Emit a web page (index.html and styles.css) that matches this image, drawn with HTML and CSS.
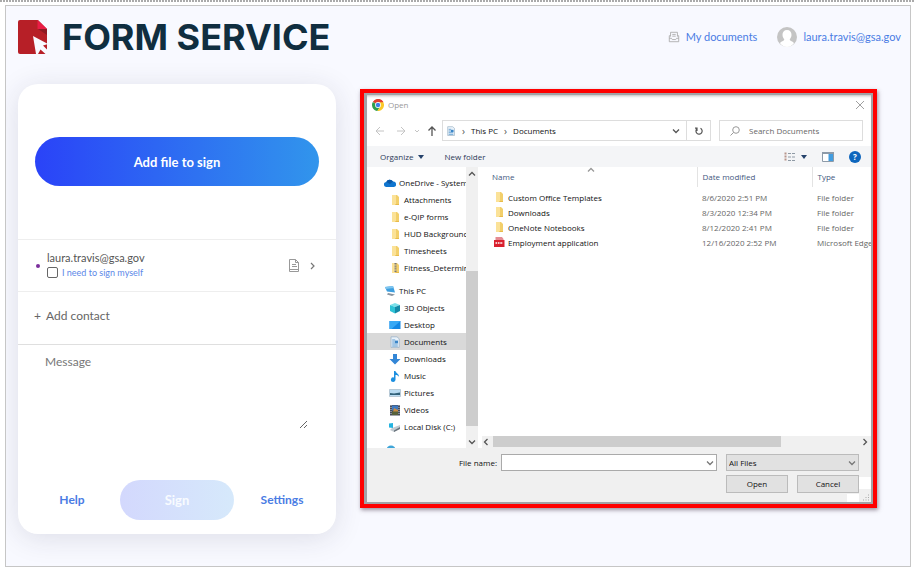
FILE: index.html
```html
<!DOCTYPE html>
<html lang="en">
<head>
<meta charset="utf-8">
<meta name="viewport" content="width=device-width, initial-scale=1">
<title>Form Service</title>
<link rel="stylesheet" href="styles.css">
</head>
<body>
<svg class="sprite" aria-hidden="true">
  <symbol id="folder" viewBox="0 0 12 12"><path fill="#f2cf6b" d="M3 1h5l2 2v8H3z"/><path fill="#fbe298" d="M3 1h4v9l-1 1H3z"/><path fill="#e8bb4b" d="M7 10h3v1H6z"/></symbol>
  <symbol id="doc" viewBox="0 0 12 12"><path fill="#e9f2fa" stroke="#9db3c6" stroke-width=".8" d="M2 .8h6l2.200 2v8.600H2z"/><path stroke="#5c9bd0" d="M3.200 4h3M3.200 6h5.600M3.200 8h5.600M3.200 10h5.600"/><path fill="#3a86c8" d="M6 4.600h3v2.600H6z"/></symbol>
  <symbol id="down" viewBox="0 0 8 8"><path fill="none" stroke="currentColor" stroke-width="1.300" d="M1 2.500l3 3 3-3"/></symbol>
</svg>
<div class="frame">
  <header class="top">
    <a class="brand" href="#">
      <svg class="brand-mark" viewBox="0 0 30 34" aria-hidden="true"><path fill="#b71f27" d="M0 2q0-2 2-2h18l9 9v25H2q-2 0-2-2z"/><path fill="#8f1a22" d="M20 9h9v6z"/><path fill="#e91d45" d="M19.500 0L29 9h-9.500z"/><path fill="#f8f9ff" d="M15 16l15 8-5 1.500 5 5V34h-2.500l-5-4.500L20 34h-2z"/></svg>
      <span>FORM SERVICE</span>
    </a>
    <nav class="links">
      <a href="#"><svg class="tray" viewBox="0 0 14 14" aria-hidden="true"><g fill="none" stroke="#aaa"><path d="M3 6.500V1.500h8v5M5 4h4M5 6h4"/><path d="M3 5.500H1.500v7h11v-7H11M1.500 8.500H4l1 1.500h4l1-1.500h2.500"/></g></svg>My documents</a>
      <a href="#"><svg class="avatar" viewBox="0 0 20 20" aria-hidden="true"><circle cx="10" cy="10" r="10" fill="#c4c4c4"/><path fill="#fff" d="M10 3c3 0 4.600 2 4.500 5-.1 2-1 3.500-1.800 4.400 0 1.600 3.300 1.600 4.300 3.800A10 10 0 0 1 10 20a10 10 0 0 1-7-3.800c1-2.200 4.300-2.200 4.300-3.800C6.500 11.500 5.600 10 5.500 8 5.400 5 7 3 10 3z"/></svg>laura.travis@gsa.gov</a>
    </nav>
  </header>
  <main class="content">
    <form class="card">
      <div class="upload"><button type="button" class="add-file">Add file to sign</button></div>
      <div class="contact">
        <span class="dot"></span>
        <div class="person">
          <div class="mail">laura.travis@gsa.gov</div>
          <label class="self"><input type="checkbox">I need to sign myself</label>
        </div>
        <svg class="note" viewBox="0 0 11 13" aria-hidden="true"><path fill="none" stroke="#999" d="M.5.500h6l3 3v7h-9zM6.500.5v3h3M.5 10v2.500h9V10M3 5.500h4M3 7.500h5"/></svg>
        <svg class="next" viewBox="0 0 5 8" aria-hidden="true"><path fill="none" stroke="#777" stroke-width="1.200" d="M1 1l3 3-3 3"/></svg>
      </div>
      <button type="button" class="add-contact"><span>+</span>Add contact</button>
      <textarea class="message" aria-label="Message" placeholder="Message"></textarea>
      <div class="actions"><a href="#">Help</a><button type="submit" class="sign" disabled>Sign</button><a href="#">Settings</a></div>
    </form>

    <section class="highlight"><form class="dialog">
      <div class="title">
        <svg class="i12" viewBox="0 0 12 12" aria-hidden="true"><path fill="#e2402f" d="M6 6L1 2.900A6 6 0 0 1 11.400 3.400z"/><path fill="#e2402f" d="M.9 3h10.500A6 6 0 0 0 .9 3z"/><path fill="#2f9e4c" d="M.9 2.900A6 6 0 0 0 5.400 12L8.300 7.500z"/><path fill="#fbc827" d="M6 3.300h5.300A6 6 0 0 1 5.400 12L8.300 7.500z"/><circle cx="6" cy="6" r="2.900" fill="#fff"/><circle cx="6" cy="6" r="2.200" fill="#3f7fe8"/></svg>
        <span>Open</span>
        <button type="button" class="plain" aria-label="Close"><svg class="i8" viewBox="0 0 8 8"><path stroke="#888" stroke-width=".8" d="M0 0l8 8M8 0L0 8"/></svg></button>
      </div>
      <div class="nav">
        <svg class="arrows" viewBox="0 0 60 10" aria-hidden="true"><g fill="none" stroke="#c4c4c4"><path d="M8 5H0M4 1L0 5l4 4M21 5h8M25 1l4 4-4 4M39 4l2 2 2-2"/><path stroke="#555" stroke-width="1.300" d="M56 10V1M52.500 4.500L56 1l3.500 3.500"/></g></svg>
        <div class="address">
          <svg class="i10"><use href="#doc"/></svg><i>›</i><span>This PC</span><i>›</i><span>Documents</span>
          <svg class="i8 chev"><use href="#down"/></svg>
          <button type="button" class="refresh" aria-label="Refresh"><svg class="i8" viewBox="0 0 8 8"><path fill="none" stroke="#555" stroke-width="1.200" d="M5.500 1.300A3.100 3.100 0 1 1 2 1.700M2 4V1.200H0"/></svg></button>
        </div>
        <label class="search"><svg class="i10" viewBox="0 0 10 10" aria-hidden="true"><path fill="none" stroke="#999" d="M3.500 6.500L.5 9.500"/><circle cx="6" cy="4" r="3.300" fill="none" stroke="#999"/></svg><input type="text" aria-label="Search Documents" placeholder="Search Documents"></label>
      </div>
      <div class="tools">
        <button type="button" class="plain">Organize <svg class="tri" viewBox="0 0 6 4"><path fill="#25426b" d="M0 0h6L3 4z"/></svg></button>
        <button type="button" class="plain">New folder</button>
        <div class="views">
          <button type="button" class="plain" aria-label="View"><svg class="i12" viewBox="0 0 12 10"><path fill="none" stroke="#b8968c" stroke-width="2" stroke-dasharray="2 1" d="M1.500.5v9"/><path stroke="#8f9aa5" stroke-dasharray="3 1" d="M4 1.500h8M4 5h8M4 8.500h8"/></svg><svg class="tri" viewBox="0 0 6 4"><path fill="#25426b" d="M0 0h6L3 4z"/></svg></button>
          <button type="button" class="plain" aria-label="Preview pane"><svg class="i12" viewBox="0 0 12 10"><path fill="#fff" stroke="#8d9aa8" d="M.5.5h11v9H.5z"/><path fill="#8d9aa8" d="M0 0h12v2H0z"/><path fill="#429de0" d="M6.500 2H11v7H6.500z"/></svg></button>
          <button type="button" class="help" aria-label="Help">?</button>
        </div>
      </div>
      <div class="panes">
        <div class="tree">
          <ul>
            <li><svg class="i12" viewBox="0 0 12 12"><path fill="#0f75cf" d="M2.500 10A2.500 2.500 0 0 1 2.300 5 3.800 3.800 0 0 1 9 4.600 2.700 2.700 0 0 1 9.800 10z"/><path fill="#0a58a8" d="M2.300 5A3.800 3.800 0 0 1 9 4.600L6 7z"/></svg>OneDrive - System</li>
            <li class="sub"><svg class="i12"><use href="#folder"/></svg>Attachments</li>
            <li class="sub"><svg class="i12"><use href="#folder"/></svg>e-QIP forms</li>
            <li class="sub"><svg class="i12"><use href="#folder"/></svg>HUD Background</li>
            <li class="sub"><svg class="i12"><use href="#folder"/></svg>Timesheets</li>
            <li class="sub"><svg class="i12" viewBox="0 0 12 12"><use href="#folder"/><path stroke="#777" stroke-width="2" stroke-dasharray="1 .6" d="M6.500 1v9"/></svg>Fitness_Determination</li>
            <li class="root"><svg class="i12" viewBox="0 0 12 12"><path fill="#3d9fe0" d="M1 2l8-1 2 6.500-8-1z"/><path fill="#7fc6ef" d="M1 2l8-1 .6 2L1.800 4z"/><path fill="#8894a0" d="M4 8l7 1.500L8 11 3 9.500z"/></svg>This PC</li>
            <li class="sub"><svg class="i12" viewBox="0 0 12 12"><path fill="#7be0ea" d="M1 3l5-2 5 2-5 2z"/><path fill="#2ec3d6" d="M1 3l5 2v6.500L1 9z"/><path fill="#1389a8" d="M11 3L6 5v6.500L11 9z"/></svg>3D Objects</li>
            <li class="sub"><svg class="i12" viewBox="0 0 12 12"><path fill="#1187e4" d="M.5 2h11v8H.5z"/><path fill="#35a8f5" d="M.5 2h11l-9 8h-2z"/></svg>Desktop</li>
            <li class="sub on"><svg class="i12"><use href="#doc"/></svg>Documents</li>
            <li class="sub"><svg class="i12" viewBox="0 0 12 12"><path fill="#3386d6" d="M4 1h4v5h3.500L6 11.500.5 6H4z"/></svg>Downloads</li>
            <li class="sub"><svg class="i12" viewBox="0 0 12 12"><path fill="#1c8fe0" d="M5 1h1.500c0 2 4 3 3.500 6-.5-1.500-2-2-3.500-2v4.500A2.300 2.300 0 1 1 5 7.500z"/></svg>Music</li>
            <li class="sub"><svg class="i12" viewBox="0 0 12 12"><path fill="#b9dcf2" stroke="#9fb2c0" stroke-width=".6" d="M.5 2.500h11v7H.5z"/><path fill="#32627a" d="M1 6l4 .5 6-1V8H1z"/></svg>Pictures</li>
            <li class="sub"><svg class="i12" viewBox="0 0 12 12"><path fill="#454b58" d="M1 1h10v10.500H1z"/><path fill="#3f79c0" d="M3 1.500h6v5H3z"/><path fill="#c98a3f" d="M5 4l4 2v2H4z"/><path fill="#57623a" d="M3 7.500h6V11H3z"/><path stroke="#c9ccd2" stroke-dasharray="1 1" d="M2 1v10M10 1v10"/></svg>Videos</li>
            <li class="sub"><svg class="i12" viewBox="0 0 12 12"><path fill="#c3cad0" d="M3 7l8-3v3.500L5 11 1 9z"/><path fill="#69737c" d="M5 9.500l6-3.500v2L5 11z"/><path fill="#25b3e0" d="M0 2.500L4 2v5L0 6.500z"/></svg>Local Disk (C:)</li>
            <li class="root"><svg class="i12" viewBox="0 0 12 12"><circle cx="7" cy="6" r="4.500" fill="#3fa5d8"/></svg>Network</li>
          </ul>
          <div class="vbar"><svg class="i8 up"><use href="#down"/></svg><div class="vthumb"></div><svg class="i8"><use href="#down"/></svg></div>
        </div>
        <div class="files">
          <table>
            <colgroup><col><col class="c-date"><col class="c-type"></colgroup>
            <thead><tr><th scope="col">Name<svg class="i8 up sort"><use href="#down"/></svg></th><th scope="col">Date modified</th><th scope="col">Type</th></tr></thead>
            <tbody>
              <tr><td><svg class="i12"><use href="#folder"/></svg>Custom Office Templates</td><td>8/6/2020 2:51 PM</td><td>File folder</td></tr>
              <tr><td><svg class="i12"><use href="#folder"/></svg>Downloads</td><td>8/3/2020 12:34 PM</td><td>File folder</td></tr>
              <tr><td><svg class="i12"><use href="#folder"/></svg>OneNote Notebooks</td><td>8/12/2020 2:41 PM</td><td>File folder</td></tr>
              <tr><td><svg class="i12" viewBox="0 0 12 12"><path fill="#e58b92" d="M2.500 1h6.500l1.500 2v2h-8z"/><path fill="#d9202e" d="M1 4h10.500v7H1z"/><path stroke="#fff" stroke-width="1.400" stroke-dasharray="1.600 .8" d="M2.500 7H10"/></svg>Employment application</td><td>12/16/2020 2:52 PM</td><td>Microsoft Edge PDF</td></tr>
            </tbody>
          </table>
          <div class="hbar"><svg class="i8 left"><use href="#down"/></svg><div class="htrack"><div class="hthumb"></div></div><svg class="i8 right"><use href="#down"/></svg></div>
        </div>
      </div>
      <div class="foot">
        <label class="fname" for="fname">File name:</label>
        <div class="field"><input id="fname" type="text"><svg class="i8"><use href="#down"/></svg></div>
        <div class="field type"><select aria-label="File type"><option>All Files</option></select><svg class="i8"><use href="#down"/></svg></div>
        <div class="buttons"><button type="button">Open</button><button type="button">Cancel</button></div>
        <svg class="grip" viewBox="0 0 8 8" aria-hidden="true"><path stroke="#aaa" stroke-dasharray="1 1.500" d="M1 7h7M3.500 4.500H8M6 2h2"/></svg>
      </div>
    </form></section>
  </main>
</div>
</body>
</html>
```

FILE: styles.css
```css
* { box-sizing: border-box; }
body {
  margin: 0;
  min-height: 100vh;
  padding: 5px 3px 4px 5px;
  background: repeating-linear-gradient(90deg, #aaa 0 2px, #fff 2px 3px) 0 0 / 100% 2px no-repeat #fff;
  font-family: Lato, "Liberation Sans", sans-serif;
  font-size: 12px;
  line-height: 16px;
  color: #555;
  display: flex;
  flex-direction: column;
}
button, input, textarea, select { font: inherit; color: inherit; margin: 0; }
button { padding: 0; border: 0; background: none; }
a { color: #4a7ce4; text-decoration: none; }
svg { display: block; flex: none; }
.sprite { position: absolute; width: 0; height: 0; }
.frame { flex: 1; border: 1px solid #c6c6c6; background: #f8f9ff; overflow: hidden; }

.top { display: flex; justify-content: space-between; height: 78px; padding: 14px 9px 0 12px; }
.brand { display: flex; align-items: center; gap: 14px; height: 34px; font: 700 36px/34px Inter, sans-serif; color: #102e40; }
.brand-mark { width: 30px; height: 34px; }
.links { display: flex; gap: 20px; height: 34px; align-items: center; font-size: 11px; }
.links a { display: flex; align-items: center; gap: 6px; }
.tray { width: 12px; height: 12px; }
.avatar { width: 20px; height: 20px; }

.content {
  display: grid;
  grid-template-columns: minmax(0, 318fr) minmax(0, 517fr);
  gap: 24px;
  padding: 0 33px 32px 12px;
  align-items: start;
}
.card { background: #fff; border-radius: 20px; box-shadow: 0 4px 28px rgba(40, 40, 70, .13); }
.upload { height: 155px; padding: 53px 17px 0; }
.add-file { display: block; width: 100%; height: 49px; border-radius: 25px; background: linear-gradient(90deg, #2a43f8, #3195ec); color: #fff; font-weight: 700; font-size: 13px; }
.contact { display: flex; align-items: center; height: 52px; padding: 0 21px 0 18px; border-top: 1px solid #eee; }
.dot { width: 4px; height: 4px; border-radius: 50%; background: #7b2f9c; }
.person { flex: 1; margin: 0 0 2px 7px; }
.mail { font-size: 11px; }
.self { display: flex; align-items: center; gap: 4px; height: 14px; font-size: 9px; line-height: 14px; color: #5c88e8; }
.self input { appearance: none; width: 11px; height: 11px; border: 1px solid #666; border-radius: 2px; background: #fff; }
.note { width: 11px; height: 13px; margin-right: 10px; }
.next { width: 5px; height: 8px; }
.add-contact { display: flex; align-items: center; width: 100%; height: 54px; padding: 0 16px 4px; border: solid #eee; border-width: 1px 0; border-bottom-color: #dfdfdf; text-align: left; color: #666; }
.add-contact span { width: 12px; }
.message { display: block; width: 290px; max-width: 100%; height: 84px; padding: 9px 27px; border: 0; background: none; resize: vertical; outline: 0; }
.message::placeholder { color: #777; }
.actions { display: grid; grid-template-columns: 1fr 114px 1fr; padding: 51px 6px 14px; text-align: center; font-weight: 700; line-height: 40px; }
.sign { height: 40px; border-radius: 20px; background: linear-gradient(90deg, #d3d8fd, #d6e9fb); color: #f8fbff; font-weight: 700; font-size: 13px; }

.highlight { margin-top: 5px; border: 4px solid #f00; box-shadow: 1px 2px 4px rgba(60, 40, 60, .5); }
.dialog { border: 2px solid #a2a2a6; border-left-width: 3px; background: #fff; font: 8px/12px "Open Sans", "Noto Sans", sans-serif; color: #111; }
.i12 { width: 12px; height: 12px; }
.i10 { width: 10px; height: 10px; }
.i8 { width: 8px; height: 8px; }
.up { transform: rotate(180deg); }
.left { transform: rotate(90deg); }
.right { transform: rotate(-90deg); }
.plain { display: flex; align-items: center; gap: 5px; }
.title { display: flex; align-items: center; height: 25px; padding: 0 7px 5px 5px; gap: 4px; color: #999; box-shadow: inset 0 3px 3px -2px #bbb; }
.title .plain { margin-left: auto; }
.nav { display: flex; align-items: center; height: 26px; padding: 0 8px 5px 9px; }
.arrows { width: 60px; height: 10px; margin-right: 6px; }
.address { display: flex; flex: 2; align-items: center; gap: 6px; height: 21px; padding-left: 3px; border: 1px solid #ddd; }
.address i { font-style: normal; font-size: 10px; color: #555; }
.chev { margin-left: auto; color: #555; }
.refresh { display: grid; place-items: center; width: 24px; height: 19px; border-left: 1px solid #ddd; }
.search { display: flex; flex: 1; align-items: center; gap: 9px; height: 21px; margin-left: 8px; padding-left: 10px; border: 1px solid #ddd; }
.search input { width: 100%; min-width: 0; border: 0; padding: 0; outline: 0; }
.search input::placeholder { color: #666; opacity: 1; }
.tools { display: flex; align-items: center; gap: 20px; height: 21px; padding: 0 10px 0 13px; background: #f4f5f7; color: #2c3a58; }
.tri { width: 6px; height: 4px; }
.views { display: flex; align-items: center; gap: 15px; margin-left: auto; }
.help { width: 12px; height: 12px; border-radius: 50%; background: #0e66bd; color: #fff; font-weight: 700; line-height: 12px; }
.panes { display: flex; height: 281px; }
.tree { display: flex; flex: none; width: 111px; }
.tree ul { flex: 1; min-width: 0; margin: 0; padding: 7px 0 0; list-style: none; overflow: hidden; }
.tree li { display: flex; align-items: center; gap: 3px; height: 17px; padding-left: 17px; white-space: nowrap; overflow: hidden; }
.tree .sub { padding-left: 22px; }
.tree .root { margin-top: 6px; }
.tree .on { background: #d9d9d9; }
.vbar { display: flex; flex-direction: column; align-items: center; justify-content: space-between; width: 12px; padding: 3px 0 2px; background: #f0f0f0; color: #555; }
.vthumb { width: 100%; height: 155px; margin-top: 80px; background: #cdcdcd; }
.files { display: flex; flex-direction: column; justify-content: space-between; flex: 1; min-width: 0; overflow: hidden; }
table { width: 100%; table-layout: fixed; border-collapse: collapse; }
.c-date { width: 115px; }
.c-type { width: 59px; }
th { position: relative; height: 20px; padding: 0 0 0 5px; border-left: 1px solid #e3e3e3; text-align: left; font-weight: 400; color: #435880; white-space: nowrap; }
th:first-child { padding-left: 14px; border: 0; }
.sort { position: absolute; top: -1px; left: 50%; color: #999; }
tbody::before { content: ""; display: block; height: 3px; }
td { height: 15px; padding: 0 0 0 5px; line-height: 15px; white-space: nowrap; color: #666; }
td:first-child { padding-left: 15px; color: #111; }
td .i12 { float: left; margin: 1px 3px 0 0; }
.hbar { display: flex; align-items: center; gap: 3px; height: 12px; margin-left: 4px; padding-right: 2px; background: #f0f0f0; color: #555; }
.htrack { flex: 1; height: 12px; }
.hthumb { width: 79%; height: 11px; background: #cdcdcd; }
.foot {
  position: relative;
  display: grid;
  grid-template-columns: 125px minmax(0, 1fr) 133px;
  gap: 4px 9px;
  grid-template-rows: 17px 18px;
  padding: 6px 12px 9px 0;
  background: linear-gradient(#fff, #fff) 100% 29px / 12px 12px no-repeat, linear-gradient(#fff, #fff) calc(100% - 12px) 100% / 12px 8px no-repeat #f0f0f0;
}
.fname { text-align: right; line-height: 17px; margin-right: -5px; }
.field { position: relative; }
.field input, .field select { display: block; width: 100%; height: 17px; padding: 0 2px; border: 1px solid #aaa; border-radius: 0; background: #fff; appearance: none; outline: 0; }
.field select { background: #e1e1e1; border-color: #bbb; }
.field svg { position: absolute; right: 3px; top: 5px; color: #777; pointer-events: none; }
.buttons { grid-column: 3; display: grid; grid-template-columns: 1fr 1fr; gap: 9px; }
.buttons button { border: 1px solid #bbb; background: #e1e1e1; }
.grip { position: absolute; right: 1px; bottom: 1px; width: 8px; height: 8px; }
```
